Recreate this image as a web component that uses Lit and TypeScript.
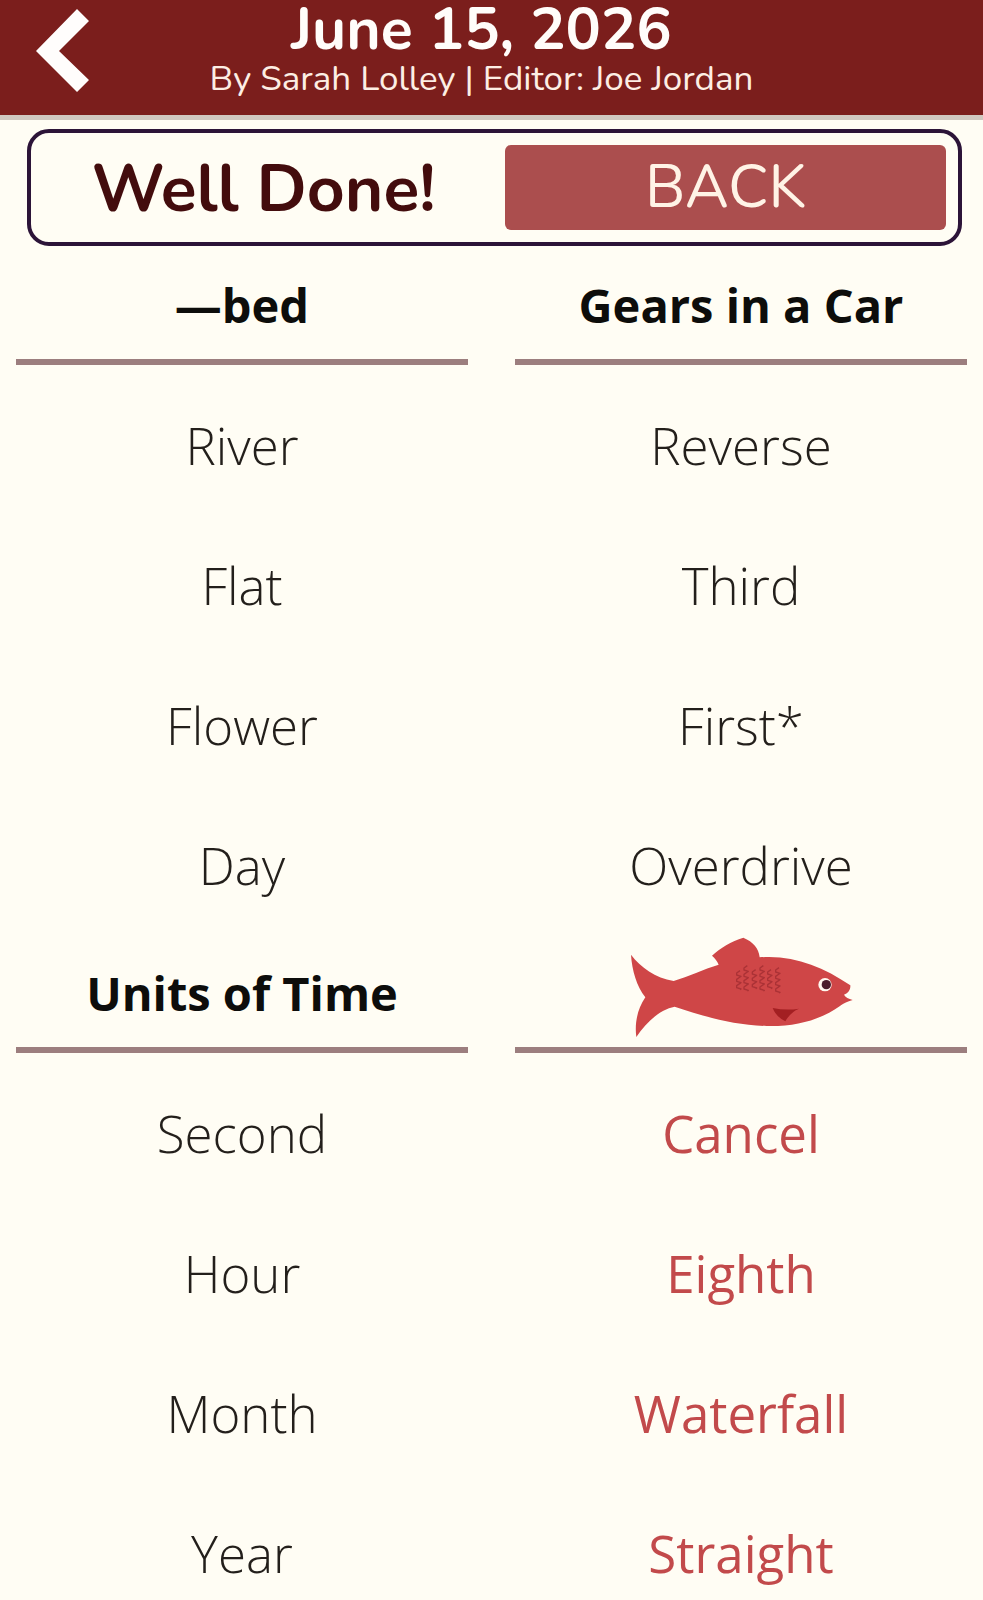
import { LitElement, html, svg, css } from "lit";
import { customElement, property } from "lit/decorators.js";

interface Group {
  title: string;
  words: string[];
  herring?: boolean;
}

const GROUPS: Group[] = [
  { title: "—bed", words: ["River", "Flat", "Flower", "Day"] },
  { title: "Gears in a Car", words: ["Reverse", "Third", "First*", "Overdrive"] },
  { title: "Units of Time", words: ["Second", "Hour", "Month", "Year"] },
  { title: "Red herrings", words: ["Cancel", "Eighth", "Waterfall", "Straight"], herring: true },
];

/** Starting points of the scale columns: x, y and number of scales. */
const SCALES: [number, number, number][] = [
  [390, 152, 3], [412, 137, 4], [437, 149, 3], [460, 137, 4], [483, 149, 3], [507, 143, 4],
];

@customElement("red-herring")
class RedHerring extends LitElement {
  static styles = css`
    :host { display: block; }
    .fish { display: block; width: 223px; height: 100px; }
  `;

  render() {
    return html`
      <svg class="fish" viewBox="60 51 669 300" role="img" aria-label="Red herrings">
        <path fill="#cf4647" d="M63 104C92 142 136 174 191 183C236 169 280 148 326 134
          C322 124 315 114 306 107C330 84 364 64 400 53C430 66 446 84 449 112
          C548 104 636 138 721 196C722 208 716 218 702 224C706 232 716 236 728 240
          C708 246 698 252 690 258C630 300 560 320 470 318C370 316 280 288 194 260
          C150 268 110 306 79 351C73 306 84 264 106 232C80 198 66 152 63 104Z"/>
        ${SCALES.map(([x, y, n]) => svg`<path fill="none" stroke="#ab3236" stroke-width="4"
          stroke-linejoin="round" d=${`M${x} ${y}` + "l-10 7v6l13 4l-3 2".repeat(n)}/>`)}
        <path fill="#a31f22" d="M488 264Q528 272 567 266Q542 276 526 304Q498 290 488 264Z"/>
        <circle cx="645" cy="194" r="20" fill="#fff8f0"/>
        <circle cx="649" cy="194" r="14" fill="#4b1c2c"/>
      </svg>
    `;
  }
}

@customElement("word-group")
class WordGroup extends LitElement {
  @property({ attribute: false }) group!: Group;

  static styles = css`
    :host { display: block; min-width: 0; }
    .title {
      display: flex;
      align-items: flex-end;
      justify-content: center;
      min-height: 100px;
      margin: 0;
      padding-bottom: 10px;
      border-bottom: 6px solid #9c7e7e;
      font-size: 47px;
      font-weight: 700;
      line-height: 87px;
      color: #0d0d0b;
    }
    .words {
      display: grid;
      gap: 70px;
      margin: 0;
      padding: 45px 0 0;
      list-style: none;
      text-align: center;
      font-size: 51px;
      font-weight: 300;
      line-height: 70px;
      color: #231f1b;
    }
    .herring { font-weight: 400; color: #c24a4b; }
  `;

  render() {
    const { title, words, herring } = this.group;
    return html`
      <h2 class="title">${herring ? html`<red-herring></red-herring>` : title}</h2>
      <ul class="words ${herring ? "herring" : ""}">
        ${words.map((w) => html`<li>${w}</li>`)}
      </ul>
    `;
  }
}

@customElement("app-root")
class AppRoot extends LitElement {
  static styles = css`
    :host {
      display: block;
      min-height: 100vh;
      background: #fffdf4;
      font-family: "Open Sans", "Noto Sans", sans-serif;
    }
    .header {
      display: grid;
      grid-template-columns: 110px 1fr 130px;
      background: #7b1e1c;
      border-bottom: 5px solid #d0c8c0;
      padding-bottom: 17px;
      font-family: Nunito, "Open Sans", sans-serif;
      text-align: center;
    }
    .prev {
      grid-row: 1 / 3;
      justify-self: end;
      align-self: start;
      margin: 9px 21px 0 0;
      padding: 0;
      border: 0;
      background: none;
      cursor: pointer;
    }
    .chevron { display: block; width: 53px; height: 83px; }
    .date {
      grid-column: 2;
      margin: 0;
      font-size: 59px;
      font-weight: 700;
      line-height: 60px;
      color: #fffdfa;
    }
    .byline {
      grid-column: 2;
      margin: 0;
      font-size: 35px;
      font-weight: 400;
      line-height: 38px;
      color: #fdeee4;
    }
    .result {
      display: grid;
      grid-template-columns: 1fr 1fr;
      align-items: center;
      gap: 21px;
      margin: 9px 21px 0 27px;
      padding: 12px;
      border: 4px solid #2c1438;
      border-radius: 22px;
      font-family: Nunito, "Open Sans", sans-serif;
      text-align: center;
    }
    .message {
      margin: 0;
      padding-top: 4px;
      font-size: 66px;
      font-weight: 700;
      line-height: 81px;
      color: #430c0d;
    }
    .back {
      height: 85px;
      padding: 0;
      border: 0;
      border-radius: 6px;
      background: #ab4e4e;
      font: 400 60px/85px Nunito, "Open Sans", sans-serif;
      color: #fff3e6;
      cursor: pointer;
    }
    .groups {
      display: grid;
      grid-template-columns: 1fr 1fr;
      gap: 37px 47px;
      padding: 3px 16px 12px;
    }
  `;

  render() {
    return html`
      <header class="header">
        <button class="prev" aria-label="Previous page">
          <svg class="chevron" viewBox="0 0 53 83" aria-hidden="true">
            <path fill="#fffdfc" d="M41 0L53 12L23 42L53 71L41 83L0 42Z"/>
          </svg>
        </button>
        <h1 class="date">June 15, 2026</h1>
        <p class="byline">By Sarah Lolley | Editor: Joe Jordan</p>
      </header>
      <main>
        <section class="result">
          <p class="message">Well Done!</p>
          <button class="back">BACK</button>
        </section>
        <div class="groups">
          ${GROUPS.map((g) => html`<word-group .group=${g}></word-group>`)}
        </div>
      </main>
    `;
  }
}
